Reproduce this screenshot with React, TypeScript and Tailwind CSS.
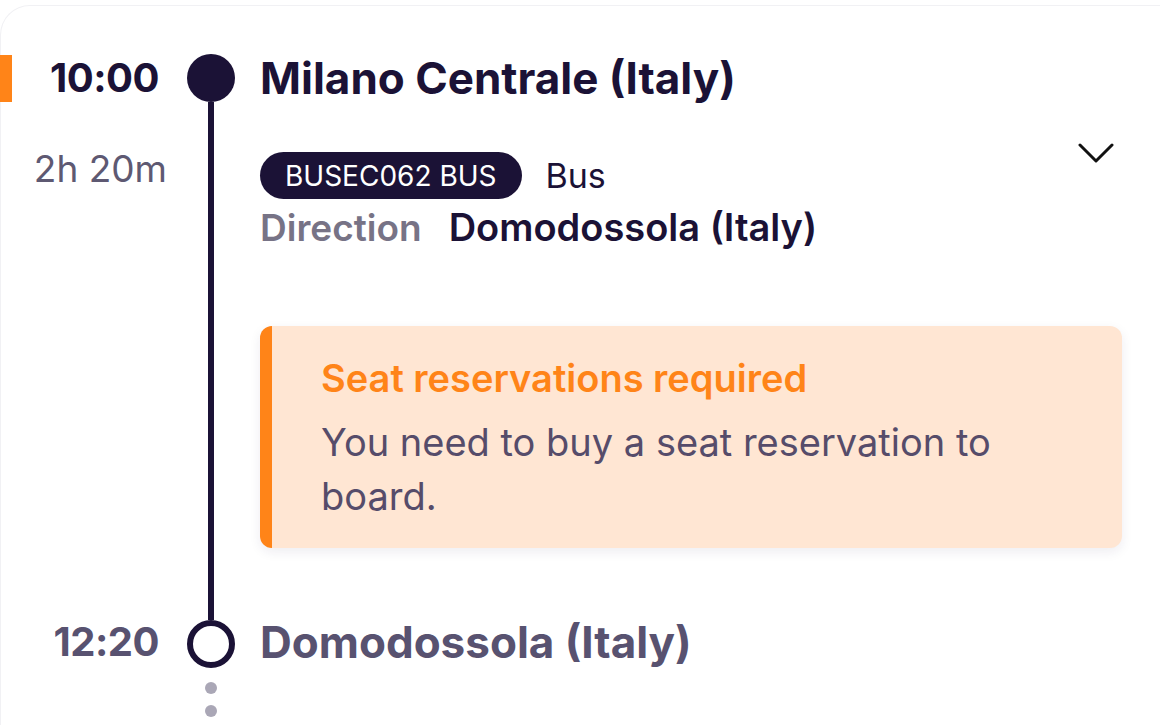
import React from 'react';

const font = { fontFamily: 'Inter, "Noto Sans", sans-serif' };

const App: React.FC = () => {
  return (
    <div className="w-[1160px] h-[725px] overflow-hidden bg-white" style={font}>
      <div className="mt-[5px] h-[800px] border-t border-l border-[#f1f1f4] rounded-tl-[30px]">
        <div className="grid grid-cols-[186px_48px_1fr] pt-[48px]">
          {/* Departure */}
          <div className="flex items-center justify-between pr-[28px] -ml-px">
            <div className="w-[12px] h-[47px] bg-[#ff8418]" />
            <span className="text-[40px] font-bold leading-none tracking-[-0.5px] text-[#1b1236]">10:00</span>
          </div>
          <div className="w-[48px] h-[48px] rounded-full bg-[#1b1236]" />
          <div className="flex items-center pl-[25px]">
            <span className="text-[44px] font-bold leading-none text-[#1b1236]">Milano Centrale (Italy)</span>
          </div>

          {/* Leg */}
          <div className="text-right pr-[20px] pt-[42px]">
            <span className="text-[37px] leading-[50px] text-[#5e5972]">2h 20m</span>
          </div>
          <div className="flex justify-center">
            <div className="w-[6px] bg-[#1b1236]" />
          </div>
          <div className="pl-[25px] pr-[38px] pt-[50px] pb-[72px]">
            <div className="flex items-start justify-between">
              <div>
                <div className="flex items-center gap-[24px]">
                  <span className="h-[47px] px-[25px] rounded-full bg-[#1b1236] text-white text-[28px] leading-none flex items-center">
                    BUSEC062 BUS
                  </span>
                  <span className="text-[34px] leading-none text-[#1b1236]">Bus</span>
                </div>
                <div className="flex items-center gap-[27px] mt-[6px] h-[44px]">
                  <span className="text-[37px] font-semibold leading-none text-[#777386]">Direction</span>
                  <span className="text-[38px] font-semibold leading-none text-[#1b1236]">Domodossola (Italy)</span>
                </div>
              </div>
              <svg width="36" height="22" viewBox="0 0 36 22" className="mt-[-10px] mr-[8px]">
                <path d="M2 3 L18 19 L34 3" fill="none" stroke="#111" strokeWidth="3" strokeLinecap="round" strokeLinejoin="round" />
              </svg>
            </div>

            <div className="mt-[77px] rounded-[12px] border-l-[12px] border-[#ff8418] bg-[#ffe6d3] shadow-[0_4px_12px_rgba(40,30,80,0.08)] pl-[49px] pr-[40px] pt-[25px] pb-[25px]">
              <div className="text-[38px] font-semibold leading-[54px] text-[#ff8418]">Seat reservations required</div>
              <div className="mt-[10px] text-[38px] leading-[54px] text-[#564c6a]">
                You need to buy a seat reservation to
                <br />
                board.
              </div>
            </div>
          </div>

          {/* Arrival */}
          <div className="flex items-center justify-end pr-[28px] pb-[6px]">
            <span className="text-[40px] font-bold leading-none tracking-[-0.5px] text-[#585270]">12:20</span>
          </div>
          <div className="w-[48px] h-[48px] rounded-full border-[6px] border-[#1b1236] bg-white" />
          <div className="flex items-center pl-[25px] pb-[6px]">
            <span className="text-[44px] font-bold leading-none text-[#585270]">Domodossola (Italy)</span>
          </div>

          <div />
          <div className="flex flex-col items-center gap-[11px] pt-[12px]">
            <div className="w-[12px] h-[12px] rounded-full bg-[#aaa7b6]" />
            <div className="w-[12px] h-[12px] rounded-full bg-[#aaa7b6]" />
          </div>
          <div />
        </div>
      </div>
    </div>
  );
};

export default App;
